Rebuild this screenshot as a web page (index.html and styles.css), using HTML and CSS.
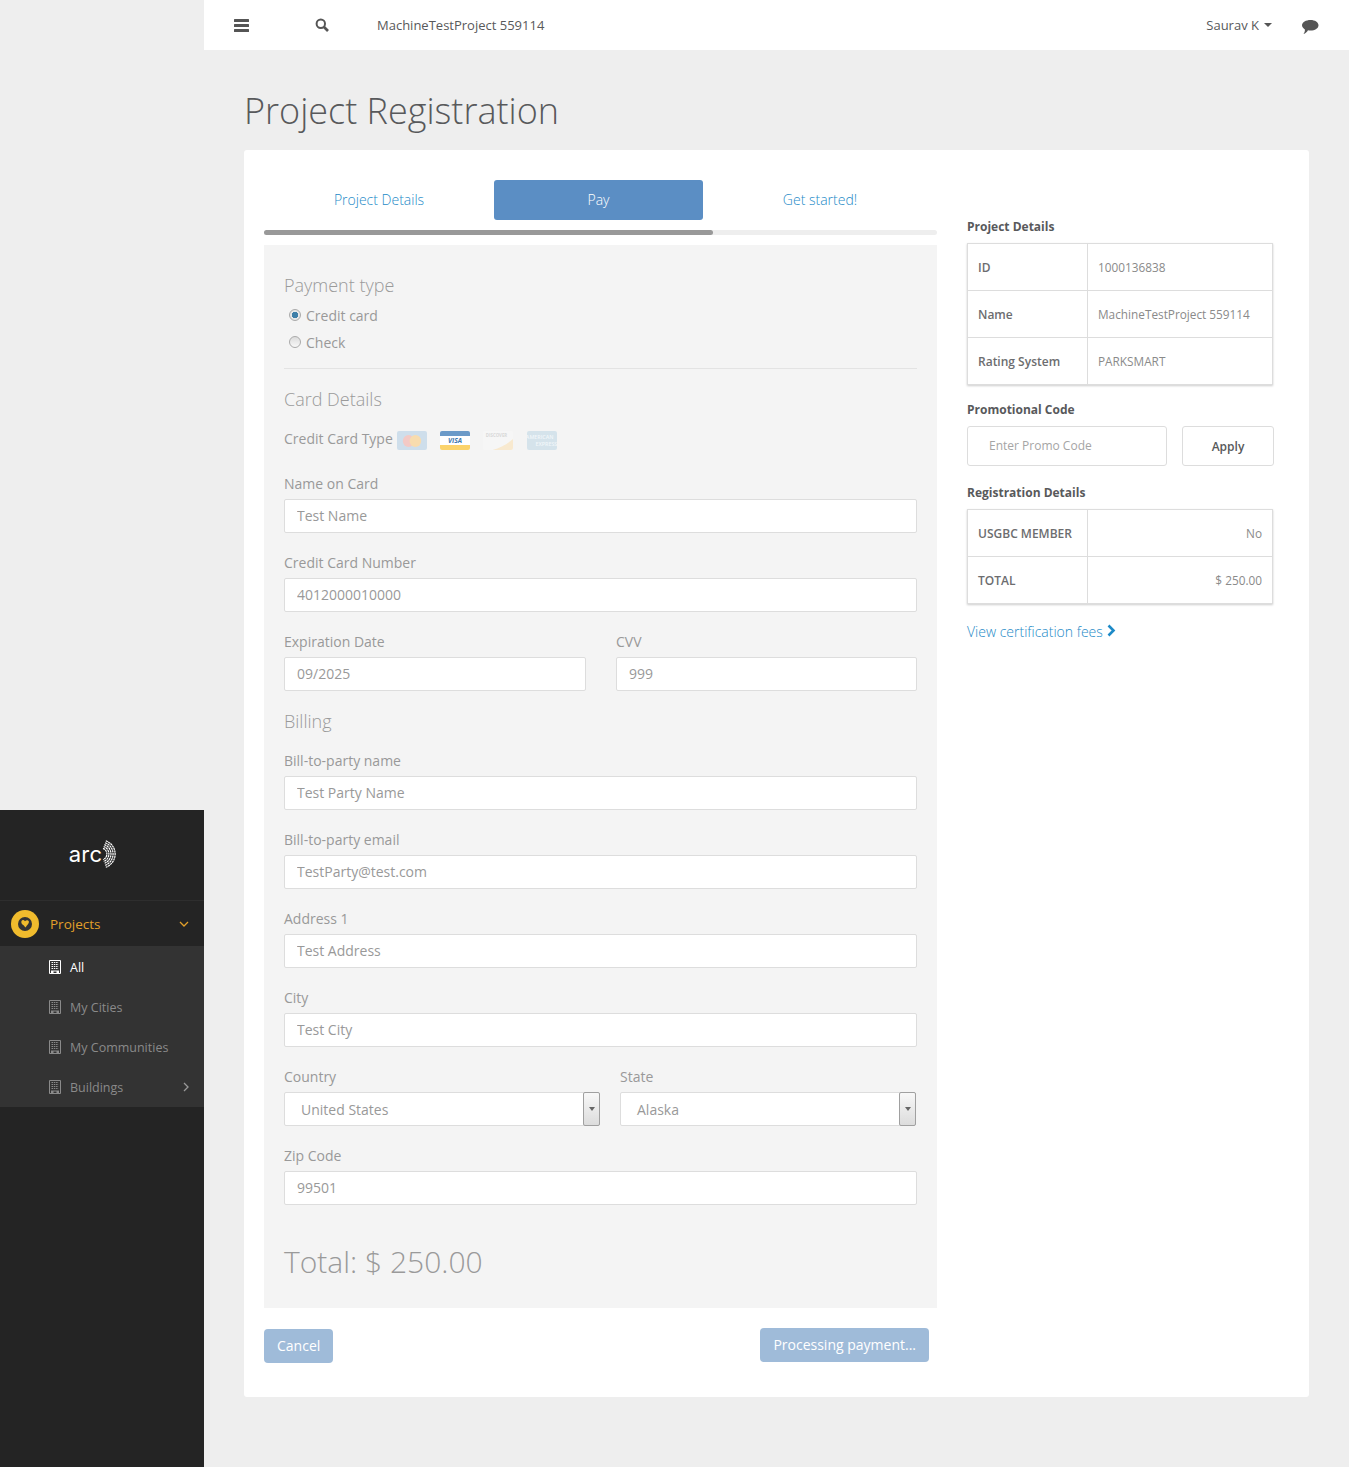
FILE: index.html
```html
<!DOCTYPE html>
<html>

<head>
    <meta charset="utf-8">
    <title>Project Registration</title>
    <link rel="stylesheet" href="styles.css">
</head>

<body>
    <div class="side">
        <div class="side-inner">
            <div class="logo">
                <span class="logo-text">arc</span>
                <svg class="logo-mark" width="20" height="30" viewBox="0 0 20 30" fill="none" stroke="#fff" stroke-width="1.200" stroke-dasharray="2.200 .5">
                    <path d="M6.800 1.800 A14 14 0 0 1 6.800 28.200" />
                    <path d="M6.100 3.700 A12 12 0 0 1 6.100 26.300" />
                    <path d="M5.400 5.600 A10 10 0 0 1 5.400 24.400" />
                    <path d="M4.700 7.500 A8 8 0 0 1 4.700 22.500" />
                    <path d="M4.050 9.400 A6 6 0 0 1 4.050 20.600" />
                </svg>
            </div>
            <div class="nav-main">
                <span class="nav-globe">
                    <svg width="18" height="18" viewBox="0 0 18 18">
                        <circle cx="9" cy="9" r="7" fill="#333" />
                        <path d="M5.500 6 C6.500 4.500 8 5 9 6.200 C10 5.200 12 4.800 12.800 6.200 C13.500 8 11 10 9.500 12.500 C8.500 11.500 8 10.500 6.800 9.800 C5.500 8.800 5 7.200 5.500 6 Z" fill="#f0bb2d" />
                    </svg>
                </span>
                <span class="nav-main-label">Projects</span>
                <svg class="nav-chev" width="10" height="6" viewBox="0 0 10 6" fill="none" stroke="#e2a02a" stroke-width="1.300">
                    <path d="M1 1 L5 5 L9 1" />
                </svg>
            </div>
            <div class="nav-sub">
                <div class="nav-item active">
                    <svg class="nav-icon" width="12" height="14" viewBox="0 0 12 14">
                        <path d="M0.500 0.500 H11.500 V13.500 H0.500 Z" fill="none" stroke="currentColor" />
                        <path d="M2.500 2.500 H9.500 M2.500 4.500 H9.500 M2.500 6.500 H9.500 M2.500 8.500 H9.500" stroke="currentColor" stroke-dasharray="1.500 .8" />
                        <path d="M2 10.500 H10 V13 H7.500 V11.500 H4.500 V13 H2 Z" fill="currentColor" />
                    </svg>
                    <span>All</span>
                </div>
                <div class="nav-item">
                    <svg class="nav-icon" width="12" height="14" viewBox="0 0 12 14">
                        <path d="M0.500 0.500 H11.500 V13.500 H0.500 Z" fill="none" stroke="currentColor" />
                        <path d="M2.500 2.500 H9.500 M2.500 4.500 H9.500 M2.500 6.500 H9.500 M2.500 8.500 H9.500" stroke="currentColor" stroke-dasharray="1.500 .8" />
                        <path d="M2 10.500 H10 V13 H7.500 V11.500 H4.500 V13 H2 Z" fill="currentColor" />
                    </svg>
                    <span>My Cities</span>
                </div>
                <div class="nav-item">
                    <svg class="nav-icon" width="12" height="14" viewBox="0 0 12 14">
                        <path d="M0.500 0.500 H11.500 V13.500 H0.500 Z" fill="none" stroke="currentColor" />
                        <path d="M2.500 2.500 H9.500 M2.500 4.500 H9.500 M2.500 6.500 H9.500 M2.500 8.500 H9.500" stroke="currentColor" stroke-dasharray="1.500 .8" />
                        <path d="M2 10.500 H10 V13 H7.500 V11.500 H4.500 V13 H2 Z" fill="currentColor" />
                    </svg>
                    <span>My Communities</span>
                </div>
                <div class="nav-item">
                    <svg class="nav-icon" width="12" height="14" viewBox="0 0 12 14">
                        <path d="M0.500 0.500 H11.500 V13.500 H0.500 Z" fill="none" stroke="currentColor" />
                        <path d="M2.500 2.500 H9.500 M2.500 4.500 H9.500 M2.500 6.500 H9.500 M2.500 8.500 H9.500" stroke="currentColor" stroke-dasharray="1.500 .8" />
                        <path d="M2 10.500 H10 V13 H7.500 V11.500 H4.500 V13 H2 Z" fill="currentColor" />
                    </svg>
                    <span>Buildings</span>
                    <svg class="nav-right" width="6" height="10" viewBox="0 0 6 10" fill="none" stroke="#999" stroke-width="1.300">
                        <path d="M1 1 L5 5 L1 9" />
                    </svg>
                </div>
            </div>
        </div>
    </div>

    <div class="main">
        <div class="topbar">
            <svg class="burger" width="15" height="13" viewBox="0 0 15 13" fill="#555">
                <rect y="0" width="15" height="3" rx=".5" />
                <rect y="5" width="15" height="3" rx=".5" />
                <rect y="10" width="15" height="3" rx=".5" />
            </svg>
            <svg class="search" width="14" height="14" viewBox="0 0 14 14" fill="none" stroke="#555">
                <circle cx="5.800" cy="5.800" r="4.200" stroke-width="2" />
                <path d="M9 9 L13 13" stroke-width="2.600" />
            </svg>
            <span class="top-project">MachineTestProject 559114</span>
            <span class="top-user">Saurav K</span>
            <span class="caret"></span>
            <svg class="chat" width="18" height="16" viewBox="0 0 18 16" fill="#555">
                <path d="M9.500 1 C14 1 17.500 3.200 17.500 6.300 C17.500 9.400 14 11.600 9.500 11.600 C8.500 11.600 7.700 11.500 7 11.300 C6 13 4.500 14.500 2.500 15 C3.500 13.700 4 12.300 3.900 10.500 C2.300 9.500 1 8 1 6.300 C1 3.200 5 1 9.500 1 Z" />
            </svg>
        </div>

        <div class="page">
            <h1 class="page-title">Project Registration</h1>

            <div class="card">
                <div class="left-col">
                    <div class="steps">
                        <div class="step">Project Details</div>
                        <div class="step step-active">Pay</div>
                        <div class="step">Get started!</div>
                    </div>
                    <div class="progress">
                        <div class="progress-fill"></div>
                    </div>

                    <div class="form-panel">
                        <h4 class="section first">Payment type</h4>
                        <label class="radio-row"><span class="radio checked"></span>Credit card</label>
                        <label class="radio-row"><span class="radio"></span>Check</label>
                        <div class="rule"></div>

                        <h4 class="section">Card Details</h4>
                        <div class="card-types">
                            <span class="card-label">Credit Card Type</span>
                            <svg class="cc cc-first" width="30" height="19" viewBox="0 0 31 19" preserveAspectRatio="none">
                                <rect width="31" height="19" rx="2" fill="#cedeeb" />
                                <circle cx="12" cy="10" r="6" fill="#f3c9c5" />
                                <circle cx="19" cy="10" r="6" fill="#f8dcae" />
                            </svg>
                            <svg class="cc" width="30" height="19" viewBox="0 0 31 19" preserveAspectRatio="none">
                                <rect width="31" height="19" rx="2" fill="#fff" />
                                <path d="M2 0 H29 Q31 0 31 2 V5 H0 V2 Q0 0 2 0 Z" fill="#6b9ac8" />
                                <path d="M0 14 H31 V17 Q31 19 29 19 H2 Q0 19 0 17 Z" fill="#fbd36c" />
                                <text x="15.500" y="12" class="cc-visa" text-anchor="middle">VISA</text>
                            </svg>
                            <svg class="cc" width="30" height="19" viewBox="0 0 31 19" preserveAspectRatio="none">
                                <rect width="31" height="19" rx="2" fill="#f6f6f6" />
                                <path d="M10 19 C18 17 25 13 31 8 V17 Q31 19 29 19 Z" fill="#f8e9cf" />
                                <text x="14" y="6" class="cc-disc" text-anchor="middle">DISCOVER</text>
                            </svg>
                            <svg class="cc" width="30" height="19" viewBox="0 0 31 19" preserveAspectRatio="none">
                                <rect width="31" height="19" rx="2" fill="#d5e3eb" />
                                <text x="13" y="8.500" class="cc-amex" text-anchor="middle">AMERICAN</text>
                                <text x="20" y="15" class="cc-amex" text-anchor="middle">EXPRESS</text>
                            </svg>
                        </div>

                        <div class="field field-name">
                            <label>Name on Card</label>
                            <input class="input" value="Test Name">
                        </div>
                        <div class="field">
                            <label>Credit Card Number</label>
                            <input class="input" value="4012000010000">
                        </div>
                        <div class="row-two">
                            <div class="field">
                                <label>Expiration Date</label>
                                <input class="input" value="09/2025">
                            </div>
                            <div class="field">
                                <label>CVV</label>
                                <input class="input" value="999">
                            </div>
                        </div>

                        <h4 class="section billing">Billing</h4>
                        <div class="field">
                            <label>Bill-to-party name</label>
                            <input class="input" value="Test Party Name">
                        </div>
                        <div class="field">
                            <label>Bill-to-party email</label>
                            <input class="input" value="TestParty@test.com">
                        </div>
                        <div class="field">
                            <label>Address 1</label>
                            <input class="input" value="Test Address">
                        </div>
                        <div class="field">
                            <label>City</label>
                            <input class="input" value="Test City">
                        </div>
                        <div class="row-select">
                            <div class="field">
                                <label>Country</label>
                                <div class="select"><span>United States</span><span class="select-btn"><i></i></span></div>
                            </div>
                            <div class="field">
                                <label>State</label>
                                <div class="select"><span>Alaska</span><span class="select-btn"><i></i></span></div>
                            </div>
                        </div>
                        <div class="field">
                            <label>Zip Code</label>
                            <input class="input" value="99501">
                        </div>

                        <div class="total">Total: $ 250.00</div>
                    </div>

                    <div class="actions">
                        <button class="btn btn-cancel">Cancel</button>
                        <button class="btn btn-process">Processing payment...</button>
                    </div>
                </div>

                <div class="right-col">
                    <div class="side-title">Project Details</div>
                    <table class="info">
                        <tr><th>ID</th><td>1000136838</td></tr>
                        <tr><th>Name</th><td>MachineTestProject 559114</td></tr>
                        <tr><th>Rating System</th><td>PARKSMART</td></tr>
                    </table>

                    <div class="side-title promo-title">Promotional Code</div>
                    <div class="promo">
                        <div class="promo-input">Enter Promo Code</div>
                        <div class="promo-btn">Apply</div>
                    </div>

                    <div class="side-title reg-title">Registration Details</div>
                    <table class="info right-vals">
                        <tr><th>USGBC MEMBER</th><td>No</td></tr>
                        <tr><th>TOTAL</th><td>$ 250.00</td></tr>
                    </table>

                    <a class="fees">View certification fees
                        <svg width="9" height="13" viewBox="0 0 9 13" fill="none" stroke="#1d8ac7" stroke-width="2.600">
                            <path d="M1.500 1.500 L6.500 6.500 L1.500 11.500" />
                        </svg>
                    </a>
                </div>
            </div>
        </div>
    </div>
</body>

</html>
```

FILE: styles.css
```css
* {
    box-sizing: border-box;
}

body {
    margin: 0;
    display: flex;
    min-height: 1467px;
    background-color: #eeeeee;
    color: #58595b;
    font-family: 'Open Sans', sans-serif;
    font-size: 14px;
}

/* sidebar */
.side {
    flex: none;
    width: 204px;
    padding-top: 810px;
    display: flex;
    flex-direction: column;
}

.side-inner {
    flex: 1;
    background-color: #242424;
}

.logo {
    height: 90px;
    display: flex;
    justify-content: center;
    align-items: center;
    padding-right: 16px;
    color: #fff;
}

.logo-text {
    font-family: 'Inter', sans-serif;
    font-size: 22px;
    font-weight: 400;
    letter-spacing: .2px;
    margin-top: -3px;
}

.logo-mark {
    margin-left: -3px;
    margin-top: -2px;
}

.nav-main {
    height: 46px;
    border-top: 1px solid #2e2e2e;
    display: flex;
    align-items: center;
    padding: 0 15px 0 11px;
}

.nav-globe {
    width: 28px;
    height: 28px;
    border-radius: 50%;
    background-color: #f0bb2d;
    display: flex;
    justify-content: center;
    align-items: center;
}

.nav-main-label {
    flex: 1;
    margin-left: 11px;
    color: #e2a02a;
    font-size: 13.500px;
}

.nav-sub {
    background-color: #333333;
    padding-top: 1px;
}

.nav-item {
    height: 40px;
    display: flex;
    align-items: center;
    padding-left: 49px;
    padding-right: 15px;
    color: #8a8a8a;
    font-size: 12.500px;
}

.nav-item.active {
    color: #fff;
}

.nav-icon {
    margin-right: 9px;
}

.nav-right {
    margin-left: auto;
}

/* top bar */
.main {
    flex: 1;
    min-width: 0;
}

.topbar {
    height: 50px;
    background-color: #fff;
    display: flex;
    align-items: center;
    padding-left: 30px;
    padding-right: 30px;
}

.search {
    margin-left: 66px;
}

.top-project {
    margin-left: 48px;
    font-size: 13px;
}

.top-user {
    margin-left: auto;
    font-size: 13px;
}

.caret {
    margin-left: 5px;
    border-top: 4px solid #555;
    border-left: 4px solid transparent;
    border-right: 4px solid transparent;
}

.chat {
    margin-left: 29px;
    margin-top: 3px;
}

/* page */
.page {
    padding: 0 40px 70px;
}

.page-title {
    margin: 0;
    height: 100px;
    padding-top: 36px;
    font-size: 36px;
    font-weight: 300;
    line-height: 50px;
    color: #58595b;
}

.card {
    background-color: #fff;
    border-radius: 3px;
    height: 1247px;
    padding: 30px 36px 0 20px;
    display: flex;
}

.left-col {
    width: 673px;
    flex: none;
}

.right-col {
    margin-left: 30px;
    flex: 1;
    padding-top: 39px;
}

/* steps */
.steps {
    display: grid;
    grid-template-columns: 230px 209px 234px;
    height: 40px;
}

.step {
    display: flex;
    justify-content: center;
    align-items: center;
    padding-bottom: 2px;
    color: #1d8ac7;
    font-weight: 300;
}

.step-active {
    background-color: #5b8ec4;
    color: #fff;
    border-radius: 3px;
}

.progress {
    margin-top: 10px;
    height: 5px;
    background-color: #eeeeee;
    border-radius: 3px;
}

.progress-fill {
    width: 449px;
    height: 5px;
    background-color: #999999;
    border-radius: 3px;
}

/* form */
.form-panel {
    margin-top: 10px;
    height: 1063px;
    padding: 0 20px;
    background-color: #f4f4f4;
    color: #9a9a9a;
}

.section {
    margin: 0;
    font-size: 18px;
    font-weight: 300;
    line-height: 24px;
    color: #9a9a9a;
}

.section.first {
    padding-top: 28px;
    height: 57px;
}

.radio-row {
    display: flex;
    align-items: center;
    height: 27px;
    padding-left: 5px;
    color: #999;
}

.radio {
    width: 12px;
    height: 12px;
    margin-right: 5px;
    margin-bottom: 2px;
    border-radius: 50%;
    border: 1px solid #aaa;
    background: linear-gradient(#dcdcdc, #f8f8f8);
}

.radio.checked {
    background: radial-gradient(circle, #3f7fa8 0, #3f7fa8 3px, #e8e8e8 3.500px);
}

.rule {
    height: 1px;
    margin-top: 12px;
    background-color: #e3e3e3;
}

.rule + .section {
    margin-top: 18px;
}

.card-types {
    display: flex;
    align-items: center;
    margin-top: 19px;
    height: 20px;
}

.card-label {
    padding-bottom: 4px;
}

.cc {
    margin-left: 13.330px;
    flex: none;
}

.cc-first {
    margin-left: 4px;
}

.cc-visa {
    font-family: 'Open Sans', sans-serif;
    font-size: 7px;
    font-weight: 700;
    font-style: italic;
    fill: #3f77ad;
}

.cc-disc {
    font-family: 'Open Sans', sans-serif;
    font-size: 4.500px;
    font-weight: 700;
    fill: #d8d8d8;
}

.cc-amex {
    font-family: 'Open Sans', sans-serif;
    font-size: 5.500px;
    font-weight: 600;
    fill: #f2f7fa;
}

.field {
    padding-top: 20px;
}

.field-name {
    padding-top: 24px;
}

.field label {
    display: block;
    height: 25px;
    line-height: 19px;
    color: #999;
}

.input {
    display: block;
    width: 100%;
    height: 34px;
    padding: 0 12px 2px;
    background-color: #fff;
    border: 1px solid #dddddd;
    border-radius: 2px;
    color: #999;
    font-family: 'Open Sans', sans-serif;
    font-size: 14px;
}

.row-two {
    display: grid;
    grid-template-columns: 302px 301px;
    column-gap: 30px;
}

.section.billing {
    margin-top: 18px;
    margin-bottom: -2px;
}

.row-select {
    display: grid;
    grid-template-columns: 316px 296px;
    column-gap: 20px;
}

.select {
    height: 34px;
    display: flex;
    align-items: center;
    justify-content: space-between;
    padding-left: 16px;
    background-color: #fff;
    border: 1px solid #dddddd;
    border-radius: 2px;
    color: #999;
}

.select-btn {
    width: 17px;
    height: 34px;
    margin-right: -1px;
    display: flex;
    justify-content: center;
    align-items: center;
    border: 1px solid #a0a0a0;
    border-radius: 2px;
    background: linear-gradient(#f8f8f8, #dcdcdc);
}

.select-btn i {
    border-top: 4px solid #666;
    border-left: 3px solid transparent;
    border-right: 3px solid transparent;
}

.total {
    margin-top: 37px;
    font-size: 30px;
    font-weight: 300;
    line-height: 40px;
    color: #9a9a9a;
}

/* bottom buttons */
.actions {
    display: flex;
    justify-content: space-between;
    align-items: flex-start;
    padding-right: 8px;
    padding-top: 20px;
}

.btn {
    height: 34px;
    padding: 0 13px 2px;
    border: 0;
    border-radius: 4px;
    background-color: #9fbbd9;
    color: #fff;
    font-family: 'Open Sans', sans-serif;
    font-size: 14px;
}

.btn-cancel {
    margin-top: 1px;
}

/* right column */
.side-title {
    font-size: 12px;
    font-weight: 700;
    line-height: 16px;
    color: #58595b;
}

.info {
    margin-top: 8px;
    width: 306px;
    border-collapse: collapse;
    box-shadow: 0 1px 2px rgba(0, 0, 0, .2);
    font-size: 11.800px;
}

.info th,
.info td {
    height: 47px;
    padding: 0 10px;
    border: 1px solid #dddddd;
    text-align: left;
}

.info th {
    width: 120px;
    font-size: 12px;
    font-weight: 600;
    color: #6c6d6f;
}

.info td {
    color: #8a8a8a;
}

.right-vals td {
    text-align: right;
}

.promo-title {
    margin-top: 17px;
}

.promo {
    margin-top: 8px;
    display: flex;
    gap: 15px;
}

.promo-input {
    width: 200px;
    height: 40px;
    padding-left: 21px;
    border: 1px solid #dddddd;
    border-radius: 3px;
    line-height: 38px;
    font-size: 12px;
    color: #a5a5a5;
}

.promo-btn {
    width: 92px;
    height: 40px;
    border: 1px solid #dddddd;
    border-radius: 3px;
    line-height: 40px;
    text-align: center;
    font-size: 12px;
    font-weight: 600;
    color: #58595b;
}

.reg-title {
    margin-top: 19px;
}

.fees {
    display: block;
    margin-top: 18px;
    color: #1d8ac7;
    font-weight: 300;
}

.fees svg {
    margin-left: 1px;
}
```
